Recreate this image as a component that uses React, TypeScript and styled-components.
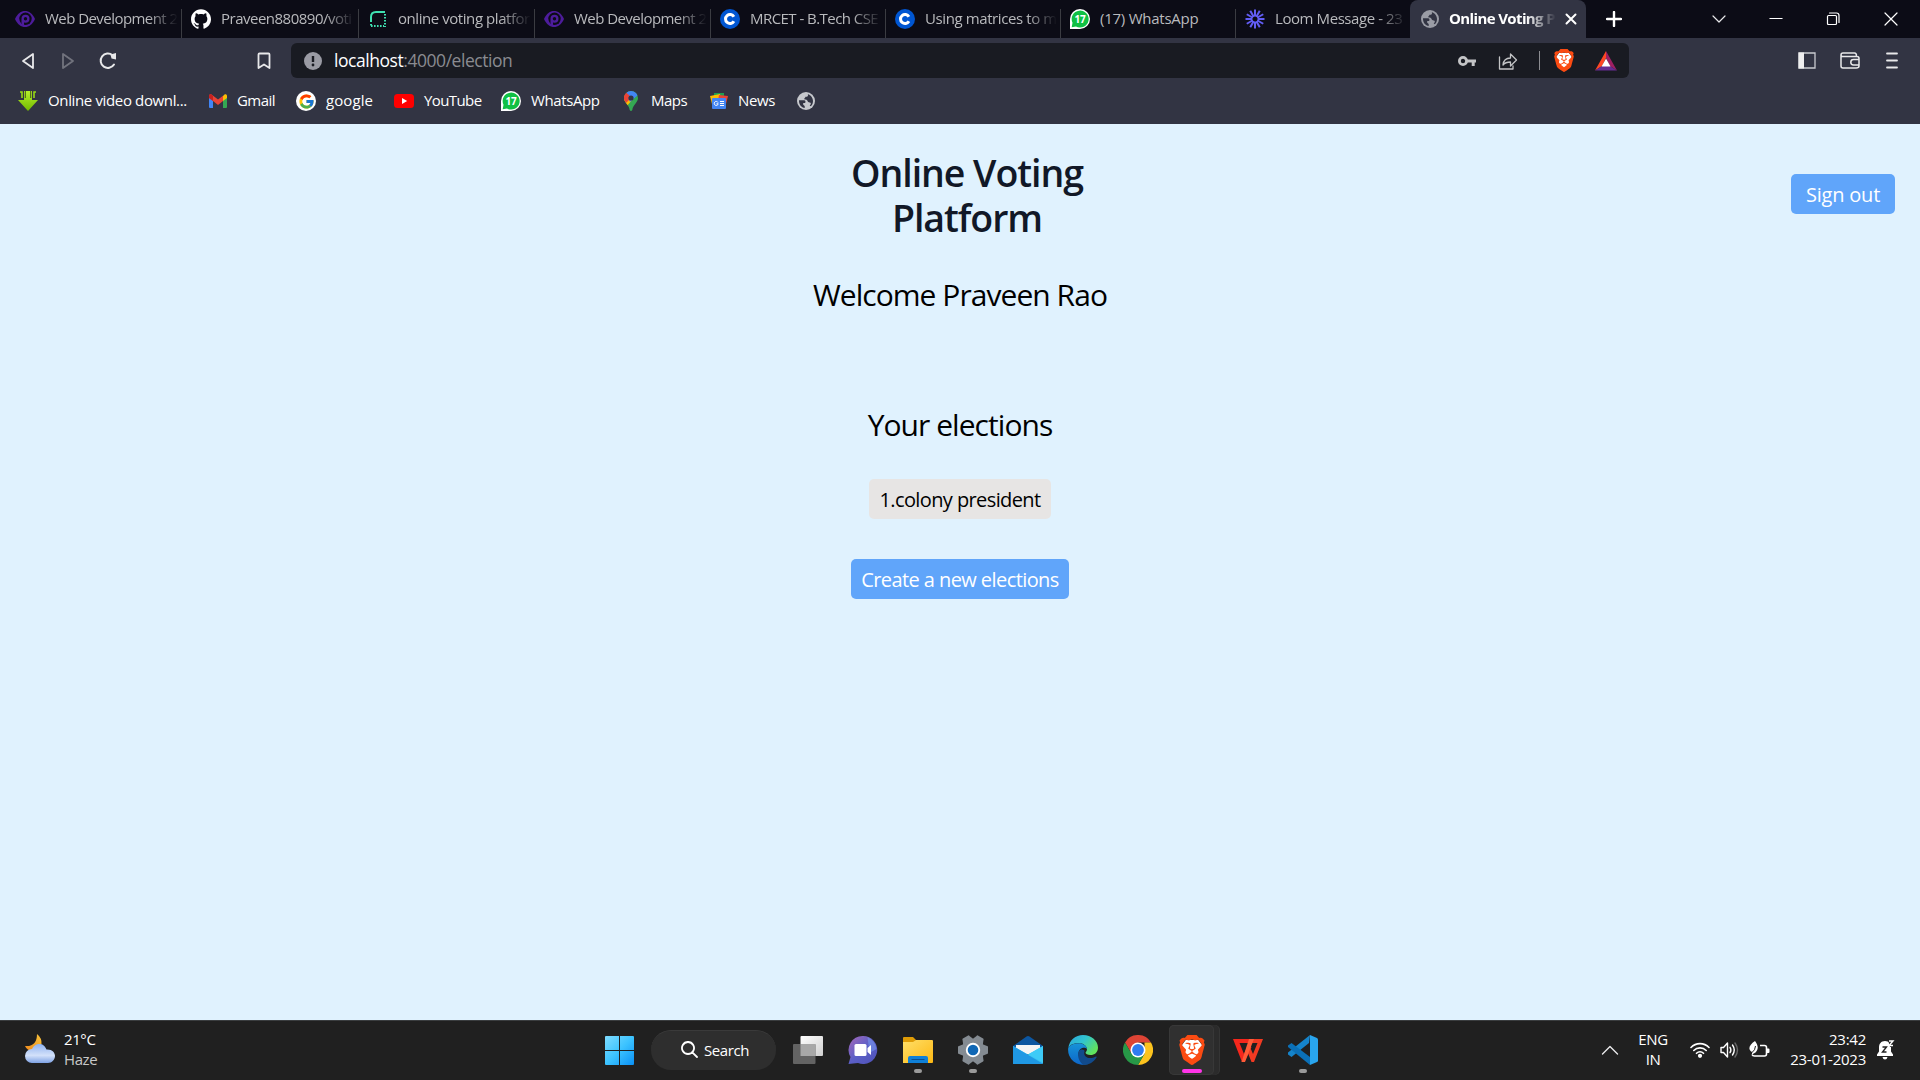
import React from "react";
import styled, { createGlobalStyle } from "styled-components";
import { SiGithub, SiBrave } from "react-icons/si";
import { FcGoogle } from "react-icons/fc";

const Global = createGlobalStyle`
  *{box-sizing:border-box}
  html,body{margin:0;padding:0;overflow:hidden}
  body{font-family:"Open Sans","Noto Sans",sans-serif}
  button{font-family:inherit;border:0;padding:0;background:none}
  svg{display:block;flex:none}
`;

const Screen = styled.div`
  width: 1920px;
  height: 1080px;
  display: flex;
  flex-direction: column;
  background: #e0f2fe;
`;

/* ---------- shared ---------- */
const Label = styled.span<{ $ls?: number; $color?: string; $size?: number; $weight?: number }>`
  white-space: nowrap;
  font-size: ${(p) => p.$size ?? 15}px;
  letter-spacing: ${(p) => p.$ls ?? -0.4}px;
  color: ${(p) => p.$color ?? "#fff"};
  font-weight: ${(p) => p.$weight ?? 400};
`;
const Slot = styled.div<{ $w: number; $ml?: number }>`
  width: ${(p) => p.$w}px;
  margin-left: ${(p) => p.$ml ?? 0}px;
  flex: none;
  display: flex;
  align-items: center;
  justify-content: center;
`;

/* ---------- tabs ---------- */
const TabStrip = styled.div`
  height: 38px;
  display: flex;
  align-items: flex-end;
  background: #0c0c16;
  padding-left: 6px;
`;
const Tab = styled.div<{ $w: number; $active?: boolean; $line?: boolean }>`
  width: ${(p) => p.$w}px;
  height: ${(p) => (p.$active ? 38 : 29)}px;
  padding: ${(p) => (p.$active ? "0 9px 0 11px" : "0 3px 9px 9px")};
  flex: none;
  display: flex;
  align-items: center;
  background: ${(p) => (p.$active ? "#323443" : "transparent")};
  border-radius: ${(p) => (p.$active ? "8px 8px 0 0" : "0")};
  border-right: ${(p) => (p.$line ? "1px solid #3b3c42" : "0")};
`;
const TabTitle = styled(Label)<{ $fade?: boolean }>`
  flex: 1;
  margin-left: 10px;
  overflow: hidden;
  line-height: 20px;
  padding-bottom: 2px;
  mask-image: ${(p) => (p.$fade ? "linear-gradient(90deg,#000 calc(100% - 30px),transparent 100%)" : "none")};
`;
const WindowControls = styled.div`
  display: flex;
  align-items: center;
  height: 38px;
  flex: 1;
`;

/* ---------- toolbar ---------- */
const Chrome = styled.div`
  height: 86px;
  background: #323443;
  display: flex;
  flex-direction: column;
`;
const Toolbar = styled.div`
  height: 40px;
  padding-top: 5px;
  display: flex;
  align-items: center;
`;
const UrlBar = styled.div`
  width: 1338px;
  height: 35px;
  margin-left: 20px;
  flex: none;
  border-radius: 6px;
  background: #191b22;
  display: flex;
  align-items: center;
  padding-left: 13px;
`;
const Url = styled(Label)`
  width: 1124px;
  margin-left: 12px;
  padding-bottom: 2px;
  flex: none;
`;
const Divider = styled.i`
  width: 1px;
  height: 19px;
  margin-left: 21px;
  background: #8b8c91;
`;
const Bookmarks = styled.div`
  height: 46px;
  display: flex;
  align-items: center;
  padding-left: 18px;
`;
const Bookmark = styled.div<{ $w: number }>`
  width: ${(p) => p.$w}px;
  display: flex;
  align-items: center;
  gap: 10px;
  flex: none;
  ${Label} {
    padding-bottom: 2px;
  }
`;

/* ---------- page ---------- */
const Page = styled.main`
  height: 896px;
  background: #e0f2fe;
  display: flex;
  flex-direction: column;
  align-items: center;
  padding-top: 26px;
`;
const Header = styled.header`
  width: 100%;
  display: grid;
  grid-template-columns: 1fr 300px 1fr;
  align-items: start;
`;
const Title = styled.h1`
  grid-column: 2;
  margin: 0;
  padding-left: 14px;
  text-align: center;
  font-size: 37.5px;
  line-height: 45px;
  font-weight: 600;
  letter-spacing: -1.05px;
  color: #111827;
`;
const Heading = styled.h2<{ $top: number }>`
  margin: ${(p) => p.$top}px 0 0;
  font-size: 30px;
  line-height: 40px;
  font-weight: 400;
  letter-spacing: -0.95px;
  color: #000;
`;
const Button = styled.button<{ $w: number; $top: number; $plain?: boolean; $ls: number }>`
  width: ${(p) => p.$w}px;
  height: 40px;
  margin-top: ${(p) => p.$top}px;
  border-radius: 5px;
  font-size: 20px;
  line-height: 38px;
  padding-top: 2px;
  letter-spacing: ${(p) => p.$ls}px;
  white-space: nowrap;
  background: ${(p) => (p.$plain ? "#e7e5e4" : "#60a5fa")};
  color: ${(p) => (p.$plain ? "#000" : "#fff")};
`;
const SignOut = styled(Button)`
  justify-self: end;
  margin-right: 25px;
`;

/* ---------- taskbar ---------- */
const Taskbar = styled.footer`
  height: 60px;
  background: #202020;
  border-top: 1px solid #3a3d3f;
  display: grid;
  grid-template-columns: 590px 743px 1fr;
  padding-bottom: 1px;
`;
const Weather = styled.div`
  display: flex;
  align-items: center;
  padding: 0 0 2px 24px;
  gap: 9px;
`;
const Stack = styled.div<{ $align?: string; $w?: number; $ml?: number }>`
  display: flex;
  flex-direction: column;
  align-items: ${(p) => p.$align ?? "flex-start"};
  width: ${(p) => (p.$w ? p.$w + "px" : "auto")};
  margin-left: ${(p) => p.$ml ?? 0}px;
  line-height: 20px;
  padding-bottom: 1px;
`;
const Apps = styled.div`
  display: flex;
  align-items: center;
`;
const SearchPill = styled.div`
  width: 125px;
  height: 40px;
  margin: 0 2px 0 4px;
  flex: none;
  border-radius: 20px;
  background: #2e2e2e;
  border-top: 1px solid #3a3a3a;
  display: flex;
  align-items: center;
  gap: 6px;
  padding: 0 0 2px 30px;
`;
const AppButton = styled.div<{ $active?: boolean }>`
  width: ${(p) => (p.$active ? 45 : 55)}px;
  height: 50px;
  margin: ${(p) => (p.$active ? "0 6px 0 4px" : "0")};
  flex: none;
  display: grid;
  grid-template-rows: 40px 10px;
  justify-items: center;
  align-items: end;
  border-radius: 5px;
  background: ${(p) => (p.$active ? "#303030" : "transparent")};
  box-shadow: ${(p) => (p.$active ? "inset 0 0 0 1px #383838, 5px 0 0 #2b2b2b, 6px 0 0 #353535" : "none")};
`;
const Dot = styled.i<{ $on?: boolean }>`
  align-self: center;
  width: ${(p) => (p.$on ? 20 : 8)}px;
  height: 4px;
  margin-top: 2px;
  border-radius: 2px;
  background: ${(p) => (p.$on ? "#ff35e8" : "#9a9a9a")};
`;
const Tray = styled.div`
  display: flex;
  align-items: center;
  padding-bottom: 1px;
`;

/* ---------- icons ---------- */
const EyeIcon = () => (
  <svg width="20" height="20" viewBox="0 0 20 20">
    <path d="M0 10C2.500 4.500 6 2 10 2s7.500 2.500 10 8c-2.500 5.500-6 8-10 8S2.500 15.500 0 10z" fill="#4d1c9b" />
    <circle cx="10.500" cy="9.800" r="6.200" fill="#0c0c16" />
    <path d="M6.500 16.500V9.800a4 4 0 1 1 4 4l-1.500-.3v3z" fill="#4d1c9b" />
    <circle cx="10.500" cy="9.800" r="1.700" fill="#0c0c16" />
  </svg>
);
const DashIcon = () => (
  <svg width="20" height="20" viewBox="0 0 20 20" fill="none" stroke="#3fe0b0" strokeWidth="2">
    <path d="M3 13V8q0-5 5-5h9" />
    <path d="M17 5v13M3 15v3M3 17h13" strokeDasharray="1.600 1.400" />
  </svg>
);
const CourseraIcon = () => (
  <svg width="20" height="20" viewBox="0 0 20 20">
    <circle cx="10" cy="10" r="10" fill="#0056d2" />
    <path d="M13.900 7.700A4.500 4.500 0 1 0 13.900 12.300" fill="none" stroke="#fff" strokeWidth="3" />
  </svg>
);
const BadgeText = styled.text`
  font: 700 10px "Open Sans", sans-serif;
  letter-spacing: -0.3px;
`;
const WhatsIcon = () => (
  <svg width="20" height="20" viewBox="0 0 20 20">
    <path d="M0 20V10A10 10 0 1 1 10 20H6z" fill="#fff" />
    <path d="M1.700 18.300l.8-4.500A8.500 8.500 0 1 1 6 17.500z" fill="#10c044" />
    <BadgeText x="10" y="13.600" textAnchor="middle" fill="#fff">17</BadgeText>
  </svg>
);
const LoomIcon = () => (
  <svg width="20" height="20" viewBox="0 0 20 20" stroke="#625df5" strokeWidth="2">
    {[0, 30, 60, 90, 120, 150, 180, 210, 240, 270, 300, 330].map((a) => (
      <path key={a} d="M10 0.500V7" transform={`rotate(${a} 10 10)`} />
    ))}
    <circle cx="10" cy="10" r="3.200" fill="none" strokeWidth="1.300" />
  </svg>
);
const GlobeIcon = ({ c, bg }: { c: string; bg: string }) => (
  <svg width="18" height="18" viewBox="0 0 18 18">
    <circle cx="9" cy="9" r="9" fill={c} />
    <path d="M2 8.300h5c1.600 0 1.900 1.900 1 2.700H6.200v1.700l1.500 1.300v2C4.500 15.500 2 12.700 2 9z" fill={bg} />
    <path d="M10.800 2.200c.7 1.700-.3 2.700-2.300 2.600-.2 1.300-1.300 1.200-1.300 2.400 1.800.2 3.200.4 3.600 2.300.3 1.200 1.600.5 2.700 1.200.7.500.3 2-.8 2.800l1 .8C15.300 13 16 11.100 16 9c0-3.300-2.200-6.100-5.200-6.800z" fill={bg} />
  </svg>
);
const DownIcon = () => (
  <svg width="20" height="20" viewBox="0 0 20 20">
    <defs><linearGradient id="dg" x2="0" y2="1"><stop stopColor="#b5f02a" /><stop offset="1" stopColor="#72b800" /></linearGradient></defs>
    <path d="M6 0h8v9h6L10 20 0 9h6z" fill="url(#dg)" />
    <path d="M2 1h2v6M18 1h-2v6" fill="none" stroke="#97d916" strokeWidth="1.600" />
    <path d="M7.300 0v7M12.700 0v7" stroke="#3c5317" strokeWidth="1" />
  </svg>
);
const GmailIcon = () => (
  <svg width="18" height="20" viewBox="0 0 18 20">
    <path d="M0 5v11q0 1 1 1h3V8z" fill="#4285f4" />
    <path d="M18 5v11q0 1-1 1h-3V8z" fill="#34a853" />
    <path d="M14 5l1.500-1.400C16.500 2.800 18 3.500 18 5v2l-4 3z" fill="#fbbc04" />
    <path d="M0 7V5c0-1.500 1.500-2.200 2.500-1.400L9 8.500l5-3.800V10l-5 4-5-4z" fill="#ea4335" />
    <path d="M0 5v2l4 3V4.800L2.500 3.600C1.500 2.800 0 3.500 0 5z" fill="#c5221f" />
  </svg>
);
const GoogleRound = styled.span`
  width: 20px;
  height: 20px;
  border-radius: 50%;
  background: #fff;
  display: grid;
  place-items: center;
  flex: none;
`;
const YoutubeIcon = () => (
  <svg width="20" height="20" viewBox="0 0 20 20"><rect y="3" width="20" height="14" rx="3.500" fill="#f00" /><path d="M8 7l5.200 3L8 13z" fill="#fff" /></svg>
);
const MapsIcon = () => (
  <svg width="14" height="20" viewBox="0 0 14 20">
    <defs><clipPath id="pin"><path d="M7 0a7 7 0 0 1 7 7c0 4.500-5 6.500-5.700 12q-1.300 2-2.600 0C5 13.500 0 11.500 0 7a7 7 0 0 1 7-7z" /></clipPath></defs>
    <g clipPath="url(#pin)">
      <path d="M0 0h14v20H0z" fill="#34a853" />
      <path d="M0 5h7l3 2-8 9-3-6z" fill="#fbbc04" />
      <path d="M0 2l7 5-5 5-2-2z" fill="#ea4335" />
      <path d="M2 2l3-3h8l1 5-8 7z" fill="#4285f4" />
      <path d="M0 2l2-.5L6 5 2 9.500 0 8z" fill="#ea4335" />
    </g>
    <circle cx="7" cy="7" r="2.600" fill="#323443" />
  </svg>
);
const NewsIcon = () => (
  <svg width="18" height="18" viewBox="0 0 18 18">
    <path d="M4 1h10v5H4z" fill="#1e9e50" />
    <path d="M0 4l10-2 1 5-9 5z" fill="#fbbc04" />
    <path d="M9 3l9 1-2 8-8-3z" fill="#ea4335" />
    <rect x="2" y="6" width="14" height="11" rx="1" fill="#4285f4" />
    <path d="M8 10.500a2 2 0 1 0 .2 1.300H6.500M10 9.500h4M10 11.500h4M10 13.500h4" stroke="#fff" strokeWidth="1" fill="none" />
  </svg>
);
const BraveIcon = ({ w, h }: { w: number; h: number }) => (
  <svg width={w} height={h} viewBox="1.600 0 20.800 24" preserveAspectRatio="none">
    <path d="M7 4h10l3 4-2 9-6 5-6-5-2-9z" fill="#fff" />
    <SiBrave size={24} color="#fb4b12" />
  </svg>
);
const BatIcon = () => (
  <svg width="22" height="20" viewBox="0 0 22 20">
    <path d="M11 0L0 19.500 7 15l4-8z" fill="#ff4724" />
    <path d="M11 0l11 19.500L15 15l-4-8z" fill="#9e1f63" />
    <path d="M0 19.500h22L15 15H7z" fill="#662d91" />
    <path d="M11 7.500L6.500 15.500h9z" fill="#fff" />
  </svg>
);
const Stroke = ({ w, h = w, d, c = "#e8e8ea", sw = 1.5, o = 1 }: { w: number; h?: number; d: string; c?: string; sw?: number; o?: number }) => (
  <svg width={w} height={h} viewBox={`0 0 ${w} ${h}`} fill="none" stroke={c} strokeWidth={sw} opacity={o} strokeLinejoin="round" strokeLinecap="round"><path d={d} /></svg>
);

const WeatherIcon = () => (
  <svg width="31" height="30" viewBox="0 0 31 30">
    <defs>
      <linearGradient id="mo" x1="1" x2="0" y2="1"><stop stopColor="#f7c33b" /><stop offset="1" stopColor="#f08a1c" /></linearGradient>
      <linearGradient id="cl" x2="0" y2="1"><stop stopColor="#8fb2ef" /><stop offset=".6" stopColor="#d3e1fa" /><stop offset="1" stopColor="#7ea2e4" /></linearGradient>
    </defs>
    <path d="M13 0q5 4 4.500 10l-8 7Q3 17 1 12q12 1 12-12z" fill="url(#mo)" />
    <path d="M8 29a6.800 6.800 0 0 1 0-14C10 11 13 10 15 10c4 0 6 2 7.500 5.500C28 15 31 18.500 31 22s-3 7-7 7z" fill="url(#cl)" />
  </svg>
);
const StartIcon = () => (
  <svg width="29" height="29" viewBox="0 0 29 29">
    <defs><linearGradient id="wi" x2="1" y2="1"><stop stopColor="#7fdcff" /><stop offset=".5" stopColor="#3cc3ff" /><stop offset="1" stopColor="#0a90f5" /></linearGradient></defs>
    <path d="M0 1q0-1 1-1h13v14H0zM15 0h13q1 0 1 1v13H15zM0 15h14v14H1q-1 0-1-1zM15 15h14v13q0 1-1 1H15z" fill="url(#wi)" />
  </svg>
);
const TaskViewIcon = () => (
  <svg width="30" height="30" viewBox="0 0 30 30">
    <defs><linearGradient id="tv" x2="1" y2="1"><stop stopColor="#fff" /><stop offset="1" stopColor="#d0d0d0" /></linearGradient></defs>
    <rect x="7.500" y="1" width="22.500" height="20" rx="1" fill="url(#tv)" />
    <rect y="9" width="22.500" height="20" rx="1" fill="#636363" />
    <path d="M7.500 9h15v12h-15z" fill="#a8a8a8" />
  </svg>
);
const ChatIcon = () => (
  <svg width="30" height="30" viewBox="0 0 30 30">
    <defs><linearGradient id="ch" x2="1" y2="1"><stop stopColor="#a868b8" /><stop offset=".5" stopColor="#5b5fc7" /><stop offset="1" stopColor="#4f52b8" /></linearGradient></defs>
    <path d="M15 1a14 14 0 1 1-5 27L.5 29l2-7A14 14 0 0 1 15 1z" fill="url(#ch)" />
    <path d="M19.500 2q8 4 9 12l-7 4z" fill="#7ba2f4" opacity=".5" />
    <rect x="6.500" y="9" width="12" height="12" rx="1.500" fill="#fff" /><path d="M19.500 13l3.500-3v10l-3.500-3z" fill="#fff" />
  </svg>
);
const FolderIcon = () => (
  <svg width="30" height="30" viewBox="0 0 30 30">
    <defs><linearGradient id="fo" x2="1" y2="1"><stop stopColor="#ffdf68" /><stop offset="1" stopColor="#fdb813" /></linearGradient></defs>
    <path d="M0 3q0-1 1-1h9l3 3v4H0z" fill="#df9c06" />
    <path d="M0 7h10l3-2h16q1 0 1 1v21q0 1-1 1H0z" fill="url(#fo)" />
    <path d="M5 28v-5q0-2 2-2h16q2 0 2 2v5z" fill="#0f80d7" /><path d="M8.500 24.500h13" stroke="#0a4f90" strokeWidth="1" />
  </svg>
);
const GearIcon = () => (
  <svg width="30" height="30" viewBox="0 0 30 30">
    <g fill="#848b92">
      {[30, 90, 150].map((a) => <path key={a} d="M11 1q0-1 1-1h6q1 0 1 1l2 5v18l-2 5q0 1-1 1h-6q-1 0-1-1l-2-5V6z" transform={`rotate(${a} 15 15)`} />)}
      <circle cx="15" cy="15" r="11" />
    </g>
    <circle cx="15" cy="15" r="7.200" fill="#fff" /><circle cx="15" cy="15" r="5.300" fill="#0f67b5" />
  </svg>
);
const MailIcon = () => (
  <svg width="30" height="30" viewBox="0 0 30 30">
    <path d="M0 11L13.500 1.500q1.500-1 3 0L30 11v3H0z" fill="#0c56a0" />
    <path d="M3 10h24v9H3z" fill="#f4f4f4" />
    <path d="M0 11l15 8.500L30 11v17q0 1-1 1H1q-1 0-1-1z" fill="#37c0f0" />
    <path d="M0 11l29.500 17.500-.5.500H1q-1 0-1-1z" fill="#1f98e4" /><path d="M15 19.500L30 11v16.500z" fill="#3ecbf7" />
  </svg>
);
const EdgeIcon = () => (
  <svg width="30" height="30" viewBox="0 0 30 30">
    <defs>
      <linearGradient id="e1" x2="1" y2=".6"><stop stopColor="#2aa5dc" /><stop offset=".5" stopColor="#31c4cf" /><stop offset="1" stopColor="#62e35c" /></linearGradient>
      <linearGradient id="e2" x2="0" y2="1"><stop stopColor="#1793d8" /><stop offset="1" stopColor="#0d66c9" /></linearGradient>
    </defs>
    <path d="M.3 13C1.500 5 7.500 0 15 0c8.500 0 15 6 15 12.500 0 5-3.500 7.500-7.500 7.500-3 0-5-1-5-2.200 0-.8 1.500-1.500 1.500-3.600C19 11 15 8 10.500 8 5 8 1.500 10.500.3 13z" fill="url(#e1)" />
    <path d="M.2 13C1.800 10 6 8.300 10.500 8.300c4.500 0 8.300 2.600 8.500 5.700-2-2.500-8-1.500-8.500 4C10 23 14 27.500 20 29A15 15 0 0 1 .2 13z" fill="url(#e2)" />
    <path d="M10.700 16.500C9 21 11 27 15.500 30 21 30 26 27 28.500 22.500c.5-.9-.4-1.200-1-.8-5.500 3.300-13 .5-11-5.500.3-1.500-4-3-5.800.3z" fill="#114a8b" />
  </svg>
);
const ChromeIcon = () => (
  <svg width="30" height="30" viewBox="0 0 30 30">
    <path d="M2 7.500A15 15 0 0 1 28 7.500H15l-6.500 11z" fill="#dd4435" />
    <path d="M28 7.500A15 15 0 0 1 15 30l6.500-11.300L21.500 7.500z" fill="#fcc31e" />
    <path d="M2 7.500A15 15 0 0 0 15 30l6.500-11.300-13 0z" fill="#279847" />
    <circle cx="15" cy="15" r="7.500" fill="#fff" /><circle cx="15" cy="15" r="5.900" fill="#2f7cf0" />
  </svg>
);
const WpsIcon = () => (
  <svg width="30" height="30" viewBox="0 0 30 30">
    <path d="M0 4h17l-1 4H6.500l4.500 11 3-7h4.500L11.500 27H9z" fill="#f5271c" />
    <path d="M18 4h12l-9 23h-2.500L14.500 17l2.500-5 3 7 4.500-11H17z" fill="#f23a22" />
    <path d="M16 4h5l-9 23H8.500z" fill="#ff5c38" />
  </svg>
);
const CodeIcon = () => (
  <svg width="30" height="30" viewBox="0 0 30 30">
    <path d="M22 0l-1 8L3.500 22 0 19.500v-2z" fill="#1584cb" />
    <path d="M0 10.500L3.500 8 22 22v8L0 12z" fill="#0b70b7" />
    <path d="M22 0l7 3q1 .5 1 1.500v21q0 1-1 1.500l-7 3z" fill="#29a5ee" />
  </svg>
);

const tabs = [
  { w: 176, icon: <EyeIcon />, t: "Web Development 2", ls: -0.55 },
  { w: 177, icon: <SiGithub size={20} color="#fff" />, t: "Praveen880890/voti", ls: -0.5 },
  { w: 176, icon: <DashIcon />, t: "online voting platfor", ls: -0.44 },
  { w: 176, icon: <EyeIcon />, t: "Web Development 2", ls: -0.55 },
  { w: 175, icon: <CourseraIcon />, t: "MRCET - B.Tech CSE", ls: -0.55 },
  { w: 175, icon: <CourseraIcon />, t: "Using matrices to m", ls: -0.4 },
  { w: 175, icon: <WhatsIcon />, t: "(17) WhatsApp", ls: -0.25, full: true },
  { w: 174, icon: <LoomIcon />, t: "Loom Message - 23", ls: -0.42 },
];

const App = () => (
  <Screen>
    <Global />
    <TabStrip>
      {tabs.map((x, i) => (
        <Tab key={i} $w={x.w} $line={i < 7}>
          {x.icon}
          <TabTitle $ls={x.ls} $color="#b9babd" $fade={!x.full}>{x.t}</TabTitle>
        </Tab>
      ))}
      <Tab $w={176} $active>
        <GlobeIcon c="#9a9ca5" bg="#323443" />
        <TabTitle $ls={-0.62} $weight={700} $fade>Online Voting P</TabTitle>
        <Slot $w={12} $ml={9}><Stroke w={12} d="M1.500 1.500l9 9m0-9l-9 9" c="#fff" sw={2} /></Slot>
      </Tab>
      <WindowControls>
        <Slot $w={16} $ml={20}><Stroke w={16} d="M8 1v14M1 8h14" c="#fff" sw={2.4} /></Slot>
        <Slot $w={14} $ml={90}><Stroke w={14} h={10} d="M1 2l6 6 6-6" sw={1.2} /></Slot>
        <Slot $w={14} $ml={43}><Stroke w={14} h={3} d="M1 .5h12" sw={1.2} c="#fff" /></Slot>
        <Slot $w={14} $ml={43}><Stroke w={14} d="M2.500 3.500h7q1 0 1 1v7q0 1-1 1h-7q-1 0-1-1v-7q0-1 1-1zM3.500 1h7q2.500 0 2.500 2.500v7" sw={1.2} c="#fff" /></Slot>
        <Slot $w={14} $ml={44}><Stroke w={14} d="M1 1l12 12M13 1L1 13" sw={1.2} c="#fff" /></Slot>
      </WindowControls>
    </TabStrip>
    <Chrome>
      <Toolbar>
        <Slot $w={14} $ml={21}><Stroke w={14} h={18} d="M12 2v14L2 9z" sw={1.8} /></Slot>
        <Slot $w={14} $ml={26}><Stroke w={14} h={18} d="M2 2v14l10-7z" o={0.35} sw={1.8} /></Slot>
        <Slot $w={18} $ml={24}>
          <svg width="18" height="18" viewBox="0 0 18 18"><path d="M15 12.500A7.200 7.200 0 1 1 13.500 3.200" fill="none" stroke="#e8e8ea" strokeWidth="2" strokeLinecap="round" /><path d="M11.500 2.500L17 1v6.500l-4.500-1z" fill="#e8e8ea" /></svg>
        </Slot>
        <Slot $w={14} $ml={140}><Stroke w={14} h={18} d="M2.500 1.500h9q1 0 1 1v13.500L7 12.500 1.500 16V2.500q0-1 1-1z" sw={1.8} /></Slot>
        <UrlBar>
          <svg width="18" height="18" viewBox="0 0 18 18"><circle cx="9" cy="9" r="9" fill="#9a9ba4" /><path d="M9 4v6" stroke="#191b22" strokeWidth="2.400" /><circle cx="9" cy="13" r="1.400" fill="#191b22" /></svg>
          <Url $size={17.5} $ls={-0.45}>localhost<Label as="span" $size={17.5} $ls={-0.45} $color="#8a8b91">:4000/election</Label></Url>
          <svg width="18" height="12" viewBox="0 0 18 12"><circle cx="5" cy="6" r="3.600" fill="none" stroke="#c3c4c6" strokeWidth="2.800" /><path d="M9 4.500h9v3h-1.300V11h-3V7.500H9z" fill="#c3c4c6" /></svg>
          <Slot $w={20} $ml={22}><Stroke w={20} h={18} d="M1.500 5v12h13.500v-3M5 13c.5-5 3-7 7.500-7V2l6 6-6 6v-4c-3.500 0-5.500.5-7.500 3z" c="#c3c4c6" sw={1.3} /></Slot>
          <Divider />
          <Slot $w={22} $ml={13}><BraveIcon w={20} h={23} /></Slot>
          <Slot $w={22} $ml={20}><BatIcon /></Slot>
        </UrlBar>
        <Slot $w={18} $ml={169}>
          <svg width="18" height="17" viewBox="0 0 18 17"><path d="M1 1h16v15H1z" fill="none" stroke="#c9cad0" strokeWidth="1.300" /><path d="M.5.500H6v16H.5z" fill="#eee" /></svg>
        </Slot>
        <Slot $w={20} $ml={24}><Stroke w={20} h={17} d="M1 3v11q0 2 2 2h13q3 0 3-2V6.500q0-2-2-2H2.500Q1 4.500 1 3q0-2 2-2h11.500q2 0 2 3M19 7.500h-5.500a2.700 2.700 0 0 0 0 5.400H19" /></Slot>
        <Slot $w={12} $ml={26}><Stroke w={12} h={17} d="M1 1.500h10M1 8.500h10M1 15.500h10" sw={1.8} /></Slot>
      </Toolbar>
      <Bookmarks>
        <Bookmark $w={191}><DownIcon /><Label $ls={-0.36}>Online video downl...</Label></Bookmark>
        <Bookmark $w={87}><GmailIcon /><Label $ls={-0.55}>Gmail</Label></Bookmark>
        <Bookmark $w={98}><GoogleRound><FcGoogle size={17} /></GoogleRound><Label $ls={0.1}>google</Label></Bookmark>
        <Bookmark $w={107}><YoutubeIcon /><Label $ls={-0.6}>YouTube</Label></Bookmark>
        <Bookmark $w={123}><WhatsIcon /><Label $ls={-0.4}>WhatsApp</Label></Bookmark>
        <Bookmark $w={86}><MapsIcon /><Slot $w={3} $ml={-10} /><Label $ls={-0.5}>Maps</Label></Bookmark>
        <Bookmark $w={87}><NewsIcon /><Label $ls={-0.4}>News</Label></Bookmark>
        <GlobeIcon c="#c6c8cd" bg="#323443" />
      </Bookmarks>
    </Chrome>
    <Page>
      <Header>
        <Title>Online Voting<br />Platform</Title>
        <SignOut $w={104} $top={24} $ls={-0.2}>Sign out</SignOut>
      </Header>
      <Heading $top={35}>Welcome Praveen Rao</Heading>
      <Heading $top={90}>Your elections</Heading>
      <Button $w={182} $top={34} $ls={-0.6} $plain>1.colony president</Button>
      <Button $w={218} $top={40} $ls={-0.58}>Create a new elections</Button>
    </Page>
    <Taskbar>
      <Weather>
        <WeatherIcon />
        <Stack><Label>21°C</Label><Label $color="#c8c8c8">Haze</Label></Stack>
      </Weather>
      <Apps>
        <Slot $w={29} $ml={15}><StartIcon /></Slot>
        <Slot $w={13} />
        <SearchPill>
          <Stroke w={17} h={17} d="M7 1a6 6 0 1 0 .01 0M11.300 11.300L16 16" sw={1.8} c="#fff" />
          <Label>Search</Label>
        </SearchPill>
        <Slot $w={2} />
        <AppButton><TaskViewIcon /></AppButton>
        <AppButton><ChatIcon /></AppButton>
        <AppButton><FolderIcon /><Dot /></AppButton>
        <AppButton><GearIcon /><Dot /></AppButton>
        <AppButton><MailIcon /></AppButton>
        <AppButton><EdgeIcon /></AppButton>
        <AppButton><ChromeIcon /></AppButton>
        <AppButton $active><BraveIcon w={26} h={30} /><Dot $on /></AppButton>
        <AppButton><WpsIcon /></AppButton>
        <AppButton><CodeIcon /><Dot /></AppButton>
      </Apps>
      <Tray>
        <Slot $w={18} $ml={268}><Stroke w={18} h={10} d="M1.500 9L9 1.500 16.500 9" sw={1.4} /></Slot>
        <Stack $align="center" $w={36} $ml={16}><Label>ENG</Label><Label>IN</Label></Stack>
        <Slot $w={20} $ml={19}>
          <svg width="20" height="16" viewBox="0 0 20 16" fill="none" stroke="#fff" strokeWidth="1.600" strokeLinecap="round"><path d="M1 5.500a12.500 12.500 0 0 1 18 0M3.800 8.500a8.700 8.700 0 0 1 12.400 0M6.500 11.300a5 5 0 0 1 7 0" /><circle cx="10" cy="13.800" r="1.300" fill="#fff" /></svg>
        </Slot>
        <Slot $w={20} $ml={10}>
          <svg width="20" height="18" viewBox="0 0 20 18" fill="none" stroke="#fff" strokeWidth="1.400" strokeLinecap="round" strokeLinejoin="round"><path d="M1 6.500h2.500L7.500 2v14l-4-4.500H1zM10 6.300q1.800 2.700 0 5.400M12.500 4q3.500 5 0 10" /><path d="M15 2q5 7 0 14" stroke="#666" /></svg>
        </Slot>
        <Slot $w={21} $ml={9}>
          <svg width="21" height="18" viewBox="0 0 21 18"><path d="M11 4.500h4.500q2 0 2 2V13q0 2-2 2h-10q-2 0-2.500-1.500" fill="none" stroke="#fff" strokeWidth="1.600" /><path d="M18 7.500h1.500q1 0 1 1V11q0 1-1 1H18zM6 0c3 4 4 8 .5 11.500L3 13.500V11C-1.500 8.500 0 4 6 0z" fill="#fff" /><path d="M6.500 5q0 4-4 7" stroke="#202020" fill="none" /></svg>
        </Slot>
        <Stack $align="flex-end" $w={90} $ml={6}><Label $ls={-0.25}>23:42</Label><Label $ls={-0.25}>23-01-2023</Label></Stack>
        <Slot $w={20} $ml={10}>
          <svg width="20" height="20" viewBox="0 0 20 20"><path d="M9 1C5 1 3 4 3 7v4.500L1 14.500V16h16v-1.500l-2-3V7C15 4 13 1 9 1z" fill="#fff" /><path d="M6.500 17h5q-.5 2.500-2.500 2.500T6.500 17z" fill="#fff" /><path d="M6.500 7h4l-4 5h4" fill="none" stroke="#202020" strokeWidth="1.400" /><path d="M12 0h7v7h-5z" fill="#202020" /><path d="M13 1h4l-4 4.500h4" fill="none" stroke="#fff" strokeWidth="1.400" /></svg>
        </Slot>
      </Tray>
    </Taskbar>
  </Screen>
);
export default App;
